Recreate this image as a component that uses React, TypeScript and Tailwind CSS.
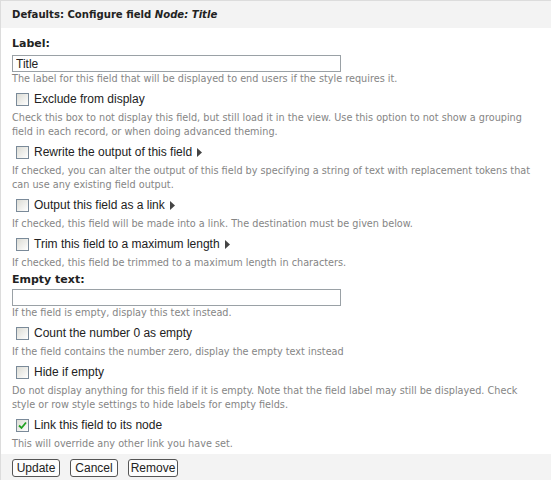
const label = "font-['Liberation_Sans',Arial,sans-serif] text-[12px] text-[#222]";
const desc = "font-['DejaVu_Sans',Verdana,sans-serif] text-[9.7px] leading-[14px] text-[#858585]";
const heading = "font-['DejaVu_Sans',Verdana,sans-serif] text-[11px] leading-[13px] font-bold text-[#222]";

function Arrow() {
  return (
    <svg width="5" height="9" viewBox="0 0 5 9" className="ml-[5px] inline-block">
      <path d="M0 0 L5 4.5 L0 9 Z" fill="#444" />
    </svg>
  );
}

function Box({ checked }: { checked?: boolean }) {
  return (
    <span className="flex h-[13px] w-[13px] shrink-0 items-center justify-center border border-[#7a8a99] bg-gradient-to-br from-[#dcdcd5] to-white">
      {checked && (
        <svg width="9" height="9" viewBox="0 0 9 9">
          <path d="M1 4.5 L3.5 7 L8 1.5" fill="none" stroke="#21a121" strokeWidth="1.8" />
        </svg>
      )}
    </span>
  );
}

function Check({
  text,
  lines,
  arrow,
  checked,
}: {
  text: string;
  lines: string[];
  arrow?: boolean;
  checked?: boolean;
}) {
  return (
    <div className="mt-[5px]">
      <div className={`flex h-[16px] items-center pl-[4px] ${label}`}>
        <Box checked={checked} />
        <span className="ml-[5px]">{text}</span>
        {arrow && <Arrow />}
      </div>
      <div className={`${desc} mt-[4px]`}>
        {lines.map((l) => (
          <div key={l}>{l}</div>
        ))}
      </div>
    </div>
  );
}

function Btn({ children, w }: { children: string; w: string }) {
  return (
    <button
      className={`${w} h-[18px] rounded-[3px] border border-[#555] bg-[#fdfdfd] px-0 font-['Liberation_Sans',Arial,sans-serif] text-[12px] leading-[15px] text-[#222]`}
    >
      {children}
    </button>
  );
}

export default function App() {
  return (
    <div className="h-[480px] w-[551px] overflow-hidden border-t border-l border-[#dcdcdc] bg-white">
      <div className="flex h-[27px] items-center bg-[#f3f3f3] pl-[11px] font-['DejaVu_Sans',Verdana,sans-serif] text-[10.1px] font-bold text-[#222]">
        Defaults: Configure field&nbsp;<i>Node: Title</i>
      </div>
      <div className="px-[11px]">
        <div className={`mt-[9px] ${heading}`}>Label:</div>
        <input
          defaultValue="Title"
          className={`mt-[5px] block h-[17px] w-[329px] border border-[#9aa1a6] px-[3px] ${label} outline-none`}
        />
        <div className={desc}>
          The label for this field that will be displayed to end users if the style requires it.
        </div>
        <Check
          text="Exclude from display"
          lines={[
            "Check this box to not display this field, but still load it in the view. Use this option to not show a grouping",
            "field in each record, or when doing advanced theming.",
          ]}
        />
        <Check
          text="Rewrite the output of this field"
          arrow
          lines={[
            "If checked, you can alter the output of this field by specifying a string of text with replacement tokens that",
            "can use any existing field output.",
          ]}
        />
        <Check
          text="Output this field as a link"
          arrow
          lines={["If checked, this field will be made into a link. The destination must be given below."]}
        />
        <Check
          text="Trim this field to a maximum length"
          arrow
          lines={["If checked, this field be trimmed to a maximum length in characters."]}
        />
        <div className={`mt-[3px] ${heading}`}>Empty text:</div>
        <input className={`mt-[3px] block h-[17px] w-[329px] border border-[#9aa1a6] px-[3px] ${label} outline-none`} />
        <div className={desc}>If the field is empty, display this text instead.</div>
        <Check
          text="Count the number 0 as empty"
          lines={["If the field contains the number zero, display the empty text instead"]}
        />
        <Check
          text="Hide if empty"
          lines={[
            "Do not display anything for this field if it is empty. Note that the field label may still be displayed. Check",
            "style or row style settings to hide labels for empty fields.",
          ]}
        />
        <Check checked text="Link this field to its node" lines={["This will override any other link you have set."]} />
      </div>
      <div className="mt-[3px] flex h-[30px] items-start gap-[10px] bg-[#f3f3f3] pl-[11px] pt-[5px]">
        <Btn w="w-[48px]">Update</Btn>
        <Btn w="w-[48px]">Cancel</Btn>
        <Btn w="w-[50px]">Remove</Btn>
      </div>
    </div>
  );
}
